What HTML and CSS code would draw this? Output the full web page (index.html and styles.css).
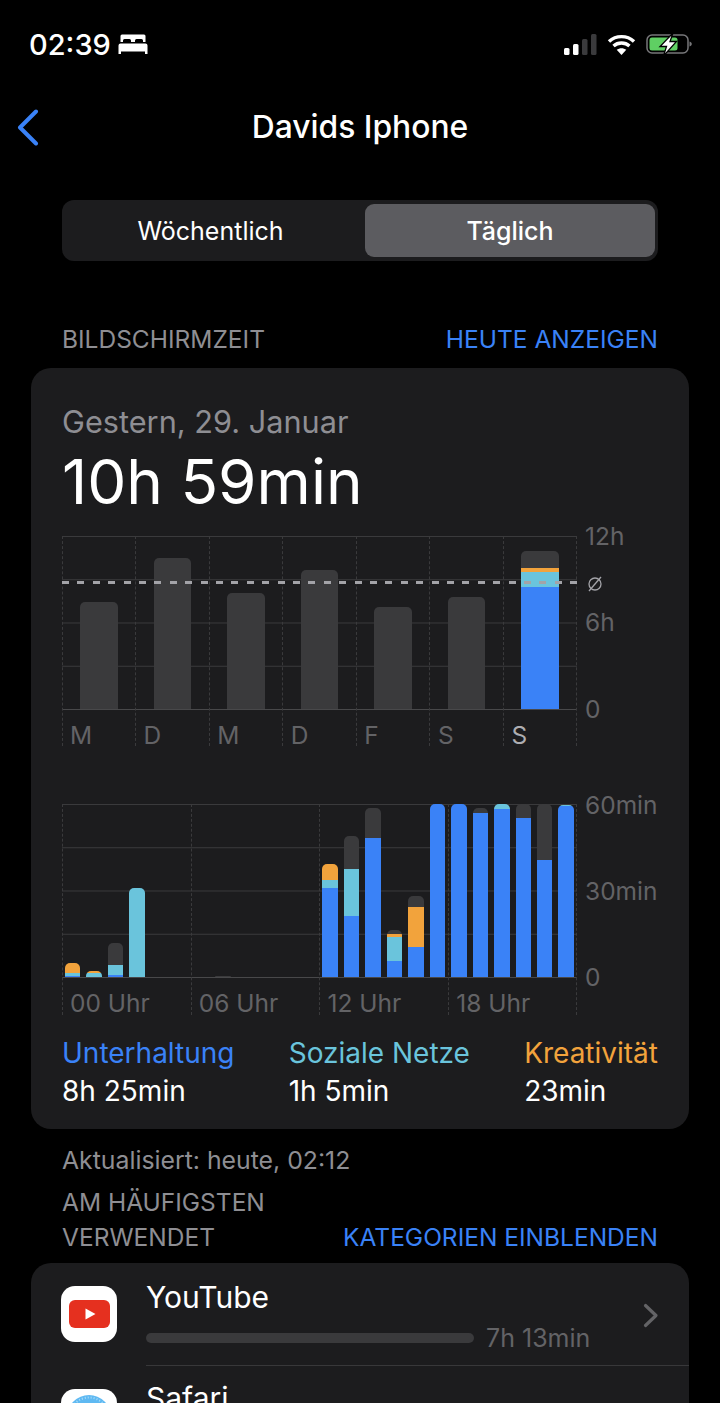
FILE: index.html
```html
<!DOCTYPE html>
<html lang="de">
<head>
    <meta charset="UTF-8">
    <meta name="viewport" content="width=device-width, initial-scale=1.0">
    <title>Davids Iphone</title>
    <link rel="stylesheet" href="styles.css">
</head>
<body>

    <!-- Status bar -->
    <header class="status-bar">
        <div class="status-left">
            <span class="clock">02:39</span>
            <svg class="bed" width="30" height="22" viewBox="0 0 30 22">
                <path fill="#fff" d="M4 1.500h22a1.500 1.500 0 0 1 1.500 1.500v6H25V7.500a1.500 1.500 0 0 0-1.500-1.500h-5A1.500 1.500 0 0 0 17 7.500V9h-4V7.500A1.500 1.500 0 0 0 11.500 6h-5A1.500 1.500 0 0 0 5 7.500V9H2.500V3A1.500 1.500 0 0 1 4 1.500zM2.500 10.500h25A2 2 0 0 1 29.500 12.500V21h-2.500v-2.500H3V21H.5v-8.500a2 2 0 0 1 2-2z"/>
            </svg>
        </div>
        <div class="status-right">
            <svg width="33" height="21" viewBox="0 0 33 21">
                <rect x="0" y="14" width="5.500" height="7" rx="1.500" fill="#fff"/>
                <rect x="9" y="10" width="5.500" height="11" rx="1.500" fill="#fff"/>
                <rect x="18" y="5" width="5.500" height="16" rx="1.500" fill="#3a3a3c"/>
                <rect x="27" y="0" width="5.500" height="21" rx="1.500" fill="#3a3a3c"/>
            </svg>
            <svg width="29" height="21" viewBox="0 0 29 21">
                <path fill="none" stroke="#fff" stroke-width="3.400" d="M2 7.500c7-6.500 18-6.500 25 0M6.500 12c4.500-4 11.500-4 16 0"/>
                <path fill="#fff" d="M14.500 21l-4.800-5.200c2.800-2.200 6.800-2.200 9.600 0z"/>
            </svg>
            <svg width="46" height="23" viewBox="0 0 46 23">
                <rect x="1" y="2" width="41" height="18" rx="5" fill="none" stroke="#77777a" stroke-width="1.500"/>
                <rect x="3.500" y="4.500" width="28" height="13" rx="2.500" fill="#5fcf63"/>
                <path d="M43.500 8.500c1.500.4 2.300 1.300 2.300 2.500s-.8 2.100-2.300 2.500z" fill="#77777a"/>
                <path d="M27 0L14 13.500h6.500L17.500 23l13-14.500h-6.500z" fill="#fff" stroke="#000" stroke-width="1.300"/>
            </svg>
        </div>
    </header>

    <!-- Navigation -->
    <nav class="nav">
        <svg class="back" width="22" height="37" viewBox="0 0 22 37">
            <path d="M19 2.500L3 18.500l16 16" fill="none" stroke="#3a82f7" stroke-width="4" stroke-linecap="round" stroke-linejoin="round"/>
        </svg>
        <h1>Davids Iphone</h1>
    </nav>

    <div class="segmented">
        <div class="segment">Wöchentlich</div>
        <div class="segment active">Täglich</div>
    </div>

    <div class="section-head first">
        <span>BILDSCHIRMZEIT</span>
        <a class="link">HEUTE ANZEIGEN</a>
    </div>

    <section class="card summary">
        <p class="date">Gestern, 29. Januar</p>
        <p class="total">10h 59min</p>

        <!-- Weekly chart -->
        <div class="chart week">
            <div class="vlines">
                <i></i><i></i><i></i><i></i><i></i><i></i><i></i><i></i>
            </div>
            <div class="plot">
                <div class="col"><div class="bar" style="height:107px"><b class="dark fill"></b></div></div>
                <div class="col"><div class="bar" style="height:151px"><b class="dark fill"></b></div></div>
                <div class="col"><div class="bar" style="height:116px"><b class="dark fill"></b></div></div>
                <div class="col"><div class="bar" style="height:139px"><b class="dark fill"></b></div></div>
                <div class="col"><div class="bar" style="height:102px"><b class="dark fill"></b></div></div>
                <div class="col"><div class="bar" style="height:112px"><b class="dark fill"></b></div></div>
                <div class="col">
                    <div class="bar" style="height:158px">
                        <b class="dark fill"></b>
                        <b class="orange" style="height:4px"></b>
                        <b class="teal" style="height:15px"></b>
                        <b class="blue" style="height:122px"></b>
                    </div>
                </div>
            </div>
            <div class="avg"></div>
            <span class="tick" style="top:0">12h</span>
            <svg class="avg-mark" width="16" height="16" viewBox="0 0 16 16">
                <circle cx="8" cy="8" r="6" fill="none" stroke="#a3a3a8" stroke-width="1.300"/>
                <path d="M2 15L14 1" stroke="#a3a3a8" stroke-width="1.300"/>
            </svg>
            <span class="tick" style="top:86px">6h</span>
            <span class="tick" style="top:173px">0</span>
            <div class="days">
                <span>M</span><span>D</span><span>M</span><span>D</span><span>F</span><span>S</span><span class="today">S</span>
            </div>
        </div>

        <!-- Hourly chart -->
        <div class="chart day">
            <div class="vlines">
                <i></i><i></i><i></i><i></i><i></i>
            </div>
            <div class="plot">
                <div class="col"><div class="bar" style="height:14px"><b class="orange fill"></b><b class="teal" style="height:3px"></b><b class="blue" style="height:1px"></b></div></div>
                <div class="col"><div class="bar" style="height:6px"><b class="orange fill"></b><b class="teal" style="height:4px"></b></div></div>
                <div class="col"><div class="bar" style="height:34px"><b class="dark fill"></b><b class="teal" style="height:10px"></b><b class="blue" style="height:2px"></b></div></div>
                <div class="col"><div class="bar" style="height:89px"><b class="teal fill"></b></div></div>
                <div class="col"></div>
                <div class="col"></div>
                <div class="col"></div>
                <div class="col"><div class="bar" style="height:1px"><b class="dark fill"></b></div></div>
                <div class="col"></div>
                <div class="col"></div>
                <div class="col"></div>
                <div class="col"></div>
                <div class="col"><div class="bar" style="height:113px"><b class="orange fill"></b><b class="teal" style="height:8px"></b><b class="blue" style="height:89px"></b></div></div>
                <div class="col"><div class="bar" style="height:141px"><b class="dark fill"></b><b class="teal" style="height:47px"></b><b class="blue" style="height:61px"></b></div></div>
                <div class="col"><div class="bar" style="height:169px"><b class="dark fill"></b><b class="blue" style="height:139px"></b></div></div>
                <div class="col"><div class="bar" style="height:47px"><b class="dark fill"></b><b class="orange" style="height:3px"></b><b class="teal" style="height:24px"></b><b class="blue" style="height:16px"></b></div></div>
                <div class="col"><div class="bar" style="height:81px"><b class="dark fill"></b><b class="orange" style="height:40px"></b><b class="blue" style="height:30px"></b></div></div>
                <div class="col"><div class="bar" style="height:173px"><b class="blue fill"></b></div></div>
                <div class="col"><div class="bar" style="height:173px"><b class="blue fill"></b></div></div>
                <div class="col"><div class="bar" style="height:169px"><b class="dark fill"></b><b class="blue" style="height:164px"></b></div></div>
                <div class="col"><div class="bar" style="height:173px"><b class="teal fill"></b><b class="blue" style="height:168px"></b></div></div>
                <div class="col"><div class="bar" style="height:173px"><b class="dark fill"></b><b class="blue" style="height:159px"></b></div></div>
                <div class="col"><div class="bar" style="height:173px"><b class="dark fill"></b><b class="blue" style="height:117px"></b></div></div>
                <div class="col"><div class="bar" style="height:172px"><b class="teal fill"></b><b class="blue" style="height:171px"></b></div></div>
            </div>
            <span class="tick" style="top:1px">60min</span>
            <span class="tick" style="top:87px">30min</span>
            <span class="tick" style="top:173px">0</span>
            <div class="hours">
                <span>00 Uhr</span><span>06 Uhr</span><span>12 Uhr</span><span>18 Uhr</span>
            </div>
        </div>

        <div class="legend">
            <div><div class="c-blue">Unterhaltung</div><div>8h 25min</div></div>
            <div><div class="c-teal">Soziale Netze</div><div>1h 5min</div></div>
            <div><div class="c-orange">Kreativität</div><div>23min</div></div>
        </div>
    </section>

    <p class="updated">Aktualisiert: heute, 02:12</p>

    <div class="section-head second">
        <span class="wrap">AM HÄUFIGSTEN VERWENDET</span>
        <a class="link">KATEGORIEN EINBLENDEN</a>
    </div>

    <section class="card apps">
        <div class="app">
            <div class="app-icon">
                <svg width="41" height="28" viewBox="0 0 41 28">
                    <rect width="41" height="28" rx="6" fill="#e5301f"/>
                    <path d="M16.500 8.500l10 5.500-10 5.500z" fill="#fff"/>
                </svg>
            </div>
            <div class="app-body">
                <div class="app-name">YouTube</div>
                <div class="usage">
                    <div class="usage-bar"></div>
                    <span>7h 13min</span>
                </div>
            </div>
            <svg class="chevron" width="16" height="25" viewBox="0 0 16 25">
                <path d="M2.500 2.500l10.500 10-10.500 10" fill="none" stroke="#636366" stroke-width="3.200" stroke-linecap="round" stroke-linejoin="round"/>
            </svg>
        </div>
        <div class="app safari">
            <div class="app-icon">
                <svg width="44" height="44" viewBox="0 0 44 44">
                    <circle cx="22" cy="22" r="22" fill="#5fb9f2"/>
                    <circle cx="22" cy="22" r="19.500" fill="none" stroke="#a9dcf8" stroke-width="2" stroke-dasharray="1 2"/>
                </svg>
            </div>
            <div class="app-body">
                <div class="app-name">Safari</div>
            </div>
        </div>
    </section>

</body>
</html>
```

FILE: styles.css
```css
/* General Page Styling */
html, body {
    height: 1403px;
    overflow: hidden;
}

body {
    font-family: 'Inter', 'Liberation Sans', sans-serif;
    background-color: #000;
    color: #fff;
    margin: 0;
    font-size: 28px;
}

p, h1 {
    margin: 0;
}

/* Status Bar */
.status-bar {
    display: flex;
    justify-content: space-between;
    align-items: center;
    height: 44px;
    padding: 22px 28px 0 29px;
}

.status-left {
    display: flex;
    align-items: center;
    gap: 7px;
}

.clock {
    font-size: 29px;
    font-weight: 500;
}

.status-right {
    display: flex;
    align-items: center;
    gap: 10px;
}

/* Navigation */
.nav {
    position: relative;
    height: 40px;
    margin-top: 40px;
    display: flex;
    justify-content: center;
    align-items: center;
}

.nav h1 {
    font-size: 31.800px;
    font-weight: 500;
}

.back {
    position: absolute;
    left: 17px;
    top: 3px;
}

/* Segmented Control */
.segmented {
    display: flex;
    height: 53px;
    margin: 54px 62px 0;
    padding: 4px 3px 4px 4px;
    background-color: #1c1c1e;
    border-radius: 12px;
    font-size: 25px;
}

.segment {
    flex: 1;
    display: flex;
    justify-content: center;
    align-items: center;
    margin-right: 10px;
    border-radius: 9px;
}

.segment.active {
    flex: none;
    width: 290px;
    background-color: #5c5c60;
    font-weight: 500;
    margin-right: 0;
}

/* Section Headers */
.section-head {
    display: flex;
    justify-content: space-between;
    align-items: flex-end;
    margin: 0 62px;
    font-size: 24.500px;
    line-height: 35px;
    color: #8e8e93;
}

.section-head.first {
    margin-top: 61px;
    height: 35px;
}

.section-head.second {
    margin-top: 7px;
}

.section-head .wrap {
    width: 240px;
}

.link {
    color: #3a82f7;
}

/* Cards */
.card {
    margin: 0 31px;
    background-color: #1c1c1e;
    border-radius: 20px;
}

.summary {
    height: 761px;
    margin-top: 11px;
    padding: 0 31px;
    box-sizing: border-box;
}

.date {
    padding-top: 35px;
    font-size: 30.700px;
    line-height: 38px;
    color: #8e8e93;
}

.total {
    font-size: 62px;
    line-height: 72px;
    margin-top: 5px;
}

/* Charts */
.chart {
    position: relative;
    width: 515px;
}

.week {
    margin-top: 18px;
    height: 210px;
}

.day {
    margin-top: 58px;
    height: 211px;
}

.plot {
    display: flex;
    height: 174px;
    box-sizing: border-box;
    background-image: linear-gradient(#3a3a3c 1px, transparent 1px);
    background-size: 100% 43.250px;
    border-bottom: 1px solid #48484a;
}

.col {
    flex: 1;
    display: flex;
    align-items: flex-end;
}

.week .col {
    padding: 0 18px;
}

.day .col {
    padding: 0 3px;
}

.bar {
    flex: 1;
    display: flex;
    flex-direction: column;
    overflow: hidden;
    border-radius: 5px 5px 0 0;
}

.bar b {
    display: block;
}

.bar .fill {
    flex: 1;
}

.dark { background-color: #3a3a3c; }
.blue { background-color: #3a82f7; }
.teal { background-color: #6ac4dc; }
.orange { background-color: #f2a33c; }

.vlines {
    position: absolute;
    left: 0;
    right: 0;
    top: 0;
    bottom: 0;
    display: flex;
    justify-content: space-between;
}

.vlines i {
    border-left: 1px dashed #3a3a3c;
}

.avg {
    position: absolute;
    left: 0;
    right: 0;
    top: 45px;
    height: 3px;
    background-image: repeating-linear-gradient(90deg, #a3a3a8 0 7px, transparent 7px 15.400px);
}

.tick {
    position: absolute;
    left: 523px;
    font-size: 24.500px;
    line-height: 30px;
    margin-top: -15px;
    color: #636366;
    white-space: nowrap;
}

.avg-mark {
    position: absolute;
    left: 525px;
    top: 40px;
}

.days, .hours {
    display: flex;
    color: #636366;
    font-size: 24.500px;
    line-height: 30px;
    margin-top: 10px;
}

.days span {
    flex: 1;
    padding-left: 8px;
}

.days .today {
    color: #aeaeb2;
}

.hours span {
    flex: 1;
    padding-left: 8px;
}

/* Legend */
.legend {
    display: flex;
    justify-content: space-between;
    margin-top: 19px;
    line-height: 38px;
}

.c-blue { color: #3a82f7; }
.c-teal { color: #6ac4dc; }
.c-orange { color: #f2a33c; }

.updated {
    margin: 13px 62px 0;
    font-size: 24.800px;
    line-height: 36px;
    color: #8e8e93;
}

/* App List */
.apps {
    margin-top: 8px;
    padding-left: 30px;
    height: 200px;
}

.app {
    display: flex;
    gap: 29px;
    height: 102px;
    padding-top: 23px;
    box-sizing: border-box;
}

.safari {
    padding-top: 24px;
}

.app-icon {
    width: 56px;
    height: 56px;
    flex: none;
    display: flex;
    justify-content: center;
    align-items: center;
    background-color: #fff;
    border-radius: 14px;
}

.app-body {
    flex: 1;
    margin-top: -8px;
}

.safari .app-body {
    border-top: 1px solid #38383a;
    margin-top: -24px;
    padding-top: 13px;
}

.app-name {
    font-size: 30px;
    line-height: 38px;
}

.usage {
    display: flex;
    align-items: center;
    gap: 12px;
    margin-top: 7px;
    font-size: 25px;
    color: #636366;
}

.usage-bar {
    width: 328px;
    height: 10px;
    border-radius: 5px;
    background-color: #3a3a3c;
}

.chevron {
    margin: 17px 30px 0 0;
    flex: none;
}
```
